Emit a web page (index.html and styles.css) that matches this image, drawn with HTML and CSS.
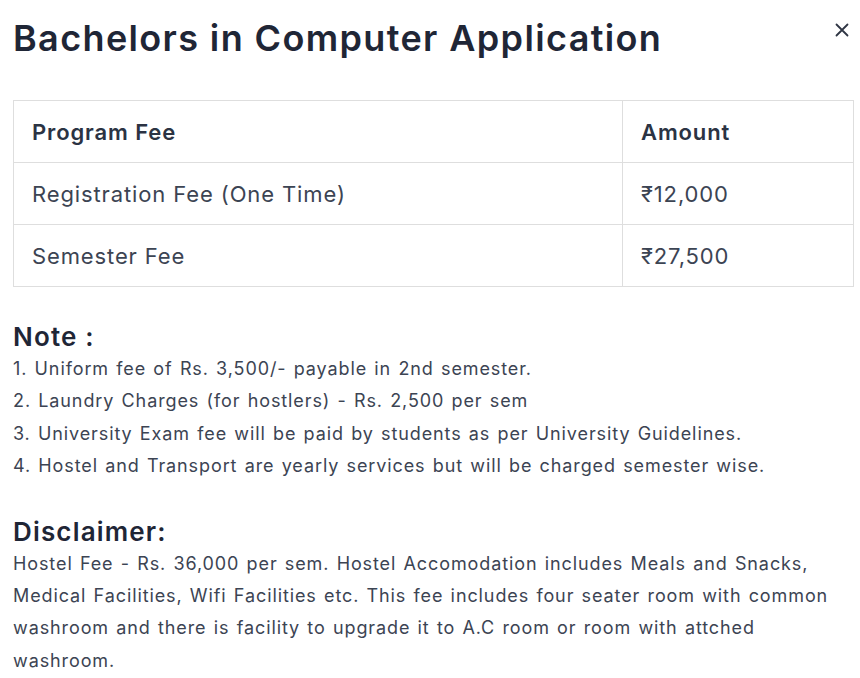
FILE: index.html
```html
<!DOCTYPE html>
<html lang="en">
<head>
<meta charset="utf-8">
<title>Bachelors in Computer Application</title>
<link rel="stylesheet" href="styles.css">
</head>
<body>
<div class="modal">
  <header class="modal-head">
    <h2 class="modal-title">Bachelors in Computer Application</h2>
    <button class="close-btn" type="button" aria-label="Close">
      <svg width="14" height="14" viewBox="0 0 14 14" aria-hidden="true"><path d="M1.5 1.5 L12.5 12.5 M12.5 1.5 L1.5 12.5" stroke="currentColor" stroke-width="1.8" stroke-linecap="round" fill="none"/></svg>
    </button>
  </header>

  <table class="fee-table">
    <colgroup><col class="col-name"><col class="col-amount"></colgroup>
    <thead>
      <tr><th>Program Fee</th><th>Amount</th></tr>
    </thead>
    <tbody>
      <tr><td>Registration Fee (One Time)</td><td>₹12,000</td></tr>
      <tr><td>Semester Fee</td><td>₹27,500</td></tr>
    </tbody>
  </table>

  <section class="note">
    <h3 class="section-title">Note :</h3>
    <p class="section-text">1. Uniform fee of Rs. 3,500/- payable in 2nd semester.<br>2. Laundry Charges (for hostlers) - Rs. 2,500 per sem<br>3. University Exam fee will be paid by students as per University Guidelines.<br>4. Hostel and Transport are yearly services but will be charged semester wise.</p>
  </section>

  <section class="disclaimer">
    <h3 class="section-title">Disclaimer:</h3>
    <p class="section-text">Hostel Fee - Rs. 36,000 per sem. Hostel Accomodation includes Meals and Snacks, Medical Facilities, Wifi Facilities etc. This fee includes four seater room with common washroom and there is facility to upgrade it to A.C room or room with attched washroom.</p>
  </section>
</div>
</body>
</html>
```
FILE: styles.css
```css
* { box-sizing: border-box; }

html, body {
  margin: 0;
  background: #ffffff;
}

body {
  font-family: Inter, "Open Sans", sans-serif;
  color: #3c4453;
}

.modal {
  width: 860px;
  padding: 17px 7px 0 13px;
}

.modal-head {
  display: flex;
  justify-content: space-between;
  align-items: flex-start;
  margin-bottom: 40px;
}

.modal-title {
  margin: 0;
  font-size: 36px;
  line-height: 43px;
  font-weight: 600;
  letter-spacing: 0.038em;
  color: #1f2636;
}

.close-btn {
  margin: 6px 4px 0 0;
  padding: 0;
  border: 0;
  background: transparent;
  color: #2f3644;
  width: 14px;
  height: 14px;
  display: flex;
  cursor: pointer;
}

.fee-table {
  width: 840px;
  border-collapse: collapse;
  table-layout: fixed;
  font-size: 22px;
  letter-spacing: 0.04em;
}

.col-name { width: 609px; }
.col-amount { width: 231px; }

.fee-table th,
.fee-table td {
  border: 1px solid #dedede;
  height: 62px;
  padding: 0 18px;
  text-align: left;
  vertical-align: middle;
  line-height: 28px;
}

.fee-table th {
  font-weight: 600;
  color: #2b3343;
}

.fee-table td {
  font-weight: 400;
  color: #3c4453;
}

.note {
  margin-top: 34px;
}

.disclaimer {
  margin-top: 33px;
}

.section-title {
  margin: 0 0 1px;
  font-size: 26px;
  line-height: 31px;
  font-weight: 600;
  letter-spacing: 0.045em;
  color: #1f2636;
}

.section-text {
  margin: 0;
  font-size: 18px;
  line-height: 32.4px;
  letter-spacing: 0.05em;
  word-spacing: 1.3px;
  color: #3c4453;
}
```
